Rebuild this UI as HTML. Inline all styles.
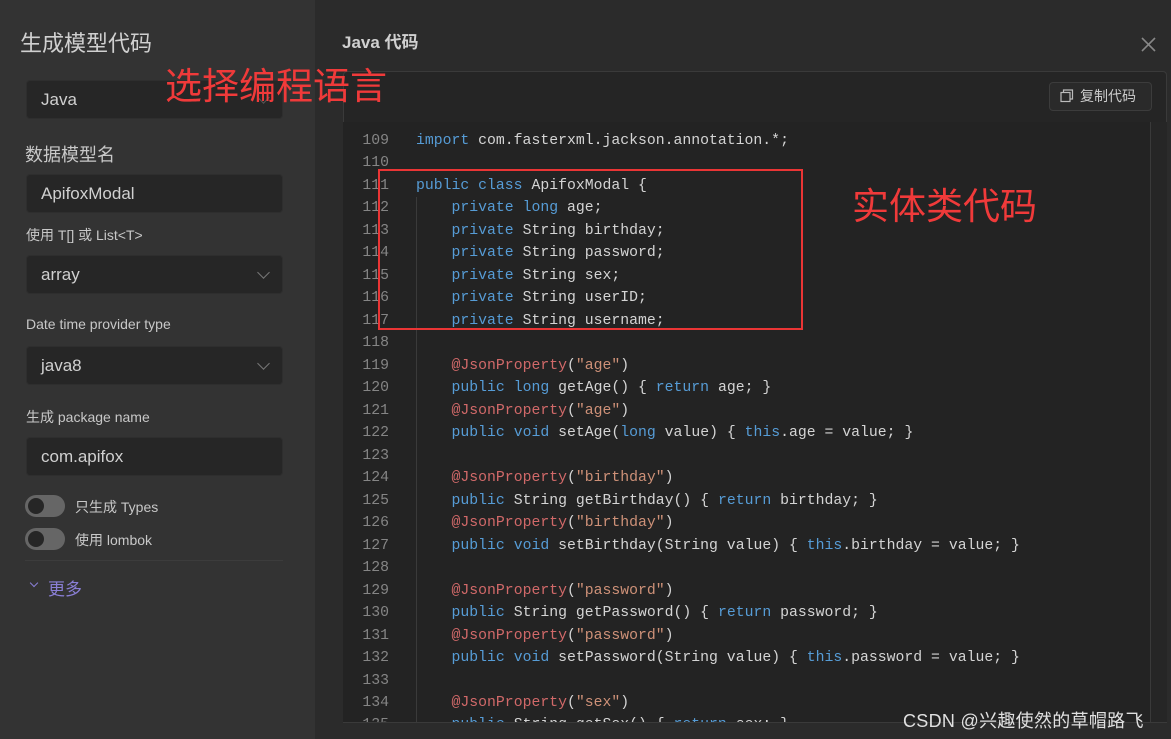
<!DOCTYPE html>
<html><head><meta charset="utf-8"><style>
*{margin:0;padding:0;box-sizing:border-box}
body{width:1171px;height:739px;overflow:hidden;background:#2b2b2b;font-family:"Liberation Sans","Noto Sans CJK SC",sans-serif;position:relative;color:#ccc}
.side{position:absolute;left:0;top:0;width:315px;height:739px;background:#333}
.abs{position:absolute}
.inp{position:absolute;left:26px;width:257px;height:39px;background:#262626;border-radius:4px;border:1px solid #2e2e2e;color:#d0d0d0;font-size:17px;line-height:37px;padding-left:14px}
.chev{position:absolute;right:14px;top:12px;width:9px;height:9px;border-right:1.5px solid #777;border-bottom:1.5px solid #777;transform:rotate(45deg)}
.lbl{position:absolute;left:26px;font-size:14px;color:#c8c8c8}
.tog{position:absolute;left:25px;width:40px;height:22px;border-radius:11px;background:#666}
.tog i{position:absolute;left:3px;top:3px;width:16px;height:16px;border-radius:50%;background:#262626}
.code{position:absolute;left:343px;top:122px;width:807px;height:600px;background:#232323;overflow:hidden;font-family:"Liberation Mono",monospace;font-size:14.8px;color:#d4d4d4}
.ln{position:absolute;left:0;width:46px;text-align:right;color:#858585}
.l{position:absolute;left:73px;white-space:pre}
.k{color:#569cd6}.a{color:#d16969}.s{color:#ce9178}
.red{position:absolute;color:#f03a3a;font-size:37px;font-family:"Noto Sans CJK SC",sans-serif;line-height:1}
</style></head><body>
<div class="side">
<div class="abs" style="left:20px;top:26px;font-size:22px;color:#d0d0d0">生成模型代码</div>
<div class="inp" style="top:80px">Java<span class="chev" style="border-color:#555"></span></div>
<div class="abs" style="left:25px;top:141px;font-size:18px;color:#c8c8c8">数据模型名</div>
<div class="inp" style="top:174px">ApifoxModal</div>
<div class="lbl" style="top:225px">使用 T[] 或 List&lt;T&gt;</div>
<div class="inp" style="top:255px">array<span class="chev"></span></div>
<div class="lbl" style="top:316px">Date time provider type</div>
<div class="inp" style="top:346px">java8<span class="chev"></span></div>
<div class="lbl" style="top:407px">生成 package name</div>
<div class="inp" style="top:437px">com.apifox</div>
<div class="tog" style="top:495px"><i></i></div>
<div class="lbl" style="left:75px;top:497px">只生成 Types</div>
<div class="tog" style="top:528px"><i></i></div>
<div class="lbl" style="left:75px;top:530px">使用 lombok</div>
<div class="abs" style="left:25px;top:560px;width:258px;height:1px;background:#3c3c3c"></div>
<div class="abs" style="left:31px;top:580px;width:6px;height:6px;border-right:1.5px solid #8a7fd6;border-bottom:1.5px solid #8a7fd6;transform:rotate(45deg)"></div>
<div class="abs" style="left:48px;top:575px;font-size:17px;color:#8a7fd6">更多</div>
</div>
<div class="abs" style="left:342px;top:28px;font-size:17px;font-weight:bold;color:#d0d0d0">Java 代码</div>
<svg class="abs" style="left:1141px;top:37px" width="15" height="15"><path d="M1 1L14 14M14 1L1 14" stroke="#888" stroke-width="1.6"/></svg>
<div class="abs" style="left:343px;top:71px;width:824px;height:52px;background:#252525;border:1px solid #3a3a3a;border-radius:4px 4px 0 0"></div>
<div class="abs" style="left:1049px;top:82px;width:103px;height:29px;border:1px solid #3c3c3c;border-radius:4px;background:#2a2a2a;font-size:14px;color:#ccc;line-height:27px;padding-left:30px">复制代码</div>
<svg class="abs" style="left:1060px;top:89px" width="14" height="14"><rect x="1" y="3.5" width="9" height="9" fill="none" stroke="#bbb" stroke-width="1.2"/><path d="M3.5 3.5V1h9v9H10" fill="none" stroke="#bbb" stroke-width="1.2"/></svg>
<div class="abs" style="left:1150px;top:122px;width:17px;height:600px;background:#262626;border-left:1px solid #3a3a3a"></div>
<div class="abs" style="left:343px;top:722px;width:824px;height:1px;background:#3a3a3a"></div>
<div class="code">
<div class="abs" style="left:73px;top:75px;width:1px;height:600px;background:#3a3a3a"></div>
<div id="c"></div>
</div>
<div class="abs" style="left:378px;top:169px;width:425px;height:161px;border:2px solid #ea3535"></div>
<div class="red" style="left:165px;top:65px">选择编程语言</div>
<div class="red" style="left:852px;top:185px">实体类代码</div>
<div class="abs" style="left:903px;top:707px;font-size:18px;color:#e0e0e0;letter-spacing:0.3px">CSDN @兴趣使然的草帽路飞</div>
<script>
var L=[
'<span class="k">import</span> com.fasterxml.jackson.annotation.*;','',
'<span class="k">public class</span> ApifoxModal {',
'    <span class="k">private long</span> age;',
'    <span class="k">private</span> String birthday;',
'    <span class="k">private</span> String password;',
'    <span class="k">private</span> String sex;',
'    <span class="k">private</span> String userID;',
'    <span class="k">private</span> String username;','',
'    <span class="a">@JsonProperty</span>(<span class="s">"age"</span>)',
'    <span class="k">public long</span> getAge() { <span class="k">return</span> age; }',
'    <span class="a">@JsonProperty</span>(<span class="s">"age"</span>)',
'    <span class="k">public void</span> setAge(<span class="k">long</span> value) { <span class="k">this</span>.age = value; }','',
'    <span class="a">@JsonProperty</span>(<span class="s">"birthday"</span>)',
'    <span class="k">public</span> String getBirthday() { <span class="k">return</span> birthday; }',
'    <span class="a">@JsonProperty</span>(<span class="s">"birthday"</span>)',
'    <span class="k">public void</span> setBirthday(String value) { <span class="k">this</span>.birthday = value; }','',
'    <span class="a">@JsonProperty</span>(<span class="s">"password"</span>)',
'    <span class="k">public</span> String getPassword() { <span class="k">return</span> password; }',
'    <span class="a">@JsonProperty</span>(<span class="s">"password"</span>)',
'    <span class="k">public void</span> setPassword(String value) { <span class="k">this</span>.password = value; }','',
'    <span class="a">@JsonProperty</span>(<span class="s">"sex"</span>)',
'    <span class="k">public</span> String getSex() { <span class="k">return</span> sex; }'];
var h='';for(var i=0;i<L.length;i++){var t=11+i*22.48;h+='<div class="ln" style="top:'+t+'px">'+(109+i)+'</div><div class="l" style="top:'+t+'px">'+L[i]+'</div>';}
document.getElementById('c').innerHTML=h;
</script>
</body></html>
